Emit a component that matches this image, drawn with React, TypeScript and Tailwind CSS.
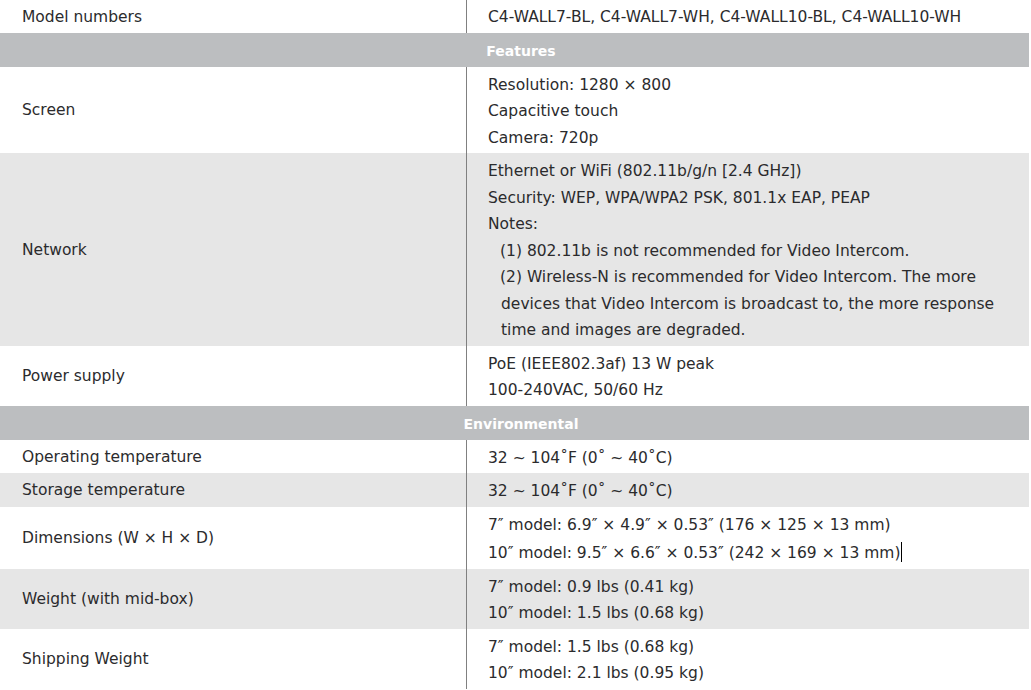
import React from "react";

type Row =
  | { kind: "header"; title: string }
  | { kind: "row"; label: string; lines: React.ReactNode[]; shaded?: boolean; first?: boolean };

const rows: Row[] = [
  {
    kind: "row",
    label: "Model numbers",
    lines: ["C4-WALL7-BL, C4-WALL7-WH, C4-WALL10-BL, C4-WALL10-WH"],
    first: true,
  },
  { kind: "header", title: "Features" },
  {
    kind: "row",
    label: "Screen",
    lines: ["Resolution: 1280 × 800", "Capacitive touch", "Camera: 720p"],
  },
  {
    kind: "row",
    label: "Network",
    shaded: true,
    lines: [
      "Ethernet or WiFi (802.11b/g/n [2.4 GHz])",
      "Security: WEP, WPA/WPA2 PSK, 801.1x EAP, PEAP",
      "Notes:",
      <div className="pl-[12px]">(1) 802.11b is not recommended for Video Intercom.</div>,
      <div className="pl-[12px]">(2) Wireless-N is recommended for Video Intercom. The more</div>,
      <div className="pl-[13px]">devices that Video Intercom is broadcast to, the more response</div>,
      <div className="pl-[13px]">time and images are degraded.</div>,
    ],
  },
  {
    kind: "row",
    label: "Power supply",
    lines: ["PoE (IEEE802.3af) 13 W peak", "100-240VAC, 50/60 Hz"],
  },
  { kind: "header", title: "Environmental" },
  { kind: "row", label: "Operating temperature", lines: ["32 ~ 104˚F (0˚ ~ 40˚C)"] },
  { kind: "row", label: "Storage temperature", shaded: true, lines: ["32 ~ 104˚F (0˚ ~ 40˚C)"] },
  {
    kind: "row",
    label: "Dimensions (W × H × D)",
    lines: [
      "7″ model: 6.9″ × 4.9″ × 0.53″ (176 × 125 × 13 mm)",
      <span>
        10″ model: 9.5″ × 6.6″ × 0.53″ (242 × 169 × 13 mm)
        <span className="ml-px inline-block h-[20px] w-px translate-y-[4px] bg-black" />
      </span>,
    ],
  },
  {
    kind: "row",
    label: "Weight (with mid-box)",
    shaded: true,
    lines: ["7″ model: 0.9 lbs (0.41 kg)", "10″ model: 1.5 lbs (0.68 kg)"],
  },
  {
    kind: "row",
    label: "Shipping Weight",
    lines: ["7″ model: 1.5 lbs (0.68 kg)", "10″ model: 2.1 lbs (0.95 kg)"],
  },
];

export default function App() {
  return (
    <main className="min-h-screen bg-white font-['DejaVu_Sans',sans-serif] text-[15.5px] text-[#2b2b2d]">
      <div className="w-[1029px]">
        {rows.map((r, i) =>
          r.kind === "header" ? (
            <div
              key={i}
              className="h-[34px] bg-[#bcbec0] pl-[13px] pt-px text-center text-[14px] font-bold leading-[34px] text-white"
            >
              {r.title}
            </div>
          ) : (
            <div key={i} className={`flex ${r.shaded ? "bg-[#e6e6e6]" : "bg-white"}`}>
              <div className="flex w-[467px] shrink-0 items-center border-r border-[#808080] pl-[22px] pt-[2px]">
                {r.label}
              </div>
              <div
                className={`flex-1 whitespace-nowrap pl-[21px] leading-[26.5px] ${
                  r.first ? "pt-[4px] pb-[2px]" : "pt-[5px] pb-[2px]"
                }`}
              >
                {r.lines.map((l, j) => (
                  <div key={j}>{l}</div>
                ))}
              </div>
            </div>
          )
        )}
      </div>
    </main>
  );
}
